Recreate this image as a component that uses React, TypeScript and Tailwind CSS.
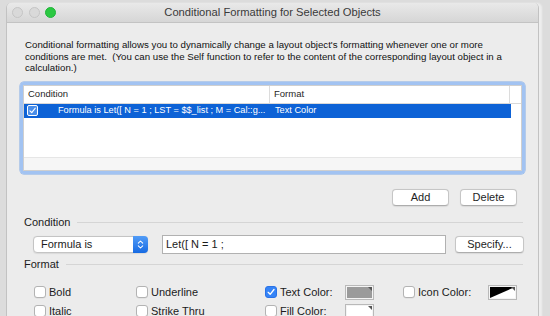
import React from "react";

const font = { fontFamily: '"Liberation Sans", Arial, sans-serif' };

function Check({ className = "" }: { className?: string }) {
  return (
    <svg viewBox="0 0 12 12" className={className} fill="none">
      <path d="M2.6 6.4 L5 8.8 L9.6 3" stroke="white" strokeWidth="1.6" strokeLinecap="round" strokeLinejoin="round" />
    </svg>
  );
}

function Box({ checked = false }: { checked?: boolean }) {
  if (checked) {
    return (
      <span className="flex h-[12px] w-[12px] shrink-0 items-center justify-center rounded-[3px] border border-[#2a72e6] bg-[#3584f7]">
        <Check className="h-[10px] w-[10px]" />
      </span>
    );
  }
  return (
    <span className="h-[12px] w-[12px] shrink-0 rounded-[3px] border border-[#b3b3b3] bg-white shadow-[0_0.5px_0_rgba(0,0,0,0.08)]" />
  );
}

function Well({ kind }: { kind: "gray" | "white" | "split" }) {
  return (
    <span className="flex h-[15px] w-[29px] shrink-0 border border-[#b9b9b9] bg-[#f4f4f4] p-[1px]">
      <svg viewBox="0 0 25 11" preserveAspectRatio="none" className="h-full w-full">
        {kind === "gray" && <rect x="0" y="0" width="25" height="11" fill="#9b9b9b" />}
        {kind === "white" && <rect x="0" y="0" width="25" height="11" fill="#ffffff" />}
        {kind === "split" && (
          <>
            <rect x="0" y="0" width="25" height="11" fill="#000000" />
            <polygon points="0,11 25,0 25,11" fill="#ffffff" />
          </>
        )}
        <polygon points="21,0 25,0 25,4" fill="#555555" />
      </svg>
    </span>
  );
}

function Button({ label, width }: { label: string; width: string }) {
  return (
    <button
      className={`${width} flex h-[17px] items-center justify-center rounded-[4px] border border-[#c6c6c6] border-b-[#adadad] bg-white text-[11px] leading-none text-[#1e1e1e] shadow-[0_0.5px_1px_rgba(0,0,0,0.08)]`}
    >
      {label}
    </button>
  );
}

function SectionLabel({ label, gap }: { label: string; gap: string }) {
  return (
    <div className="flex items-center pl-[4px] pr-[2px]">
      <span className="text-[11px] leading-[13px] text-[#1b1b1b]">{label}</span>
      <span className={`${gap} h-px flex-1 bg-[#d5d5d5]`} />
    </div>
  );
}

function Option({ checked, label, well }: { checked?: boolean; label: string; well?: "gray" | "white" | "split" }) {
  return (
    <div className="flex h-[15px] items-center">
      <Box checked={checked} />
      <span className="ml-[3px] text-[11px] leading-none text-[#1b1b1b]">{label}</span>
      {well ? <span className="ml-auto"><Well kind={well} /></span> : null}
    </div>
  );
}

export default function App() {
  return (
    <div className="h-[316px] w-[550px] overflow-hidden bg-[#dcdcdc] pl-[6px] pt-[3px]" style={font}>
      <div className="h-[320px] w-[533px] overflow-hidden rounded-t-[5px] border-x border-[#c2c2c2] bg-[#ececec] shadow-[3px_0_2px_rgba(255,255,255,0.5)]">
        {/* title bar */}
        <div className="grid h-[20px] grid-cols-[1fr_auto_1fr] items-center border-b border-[#c3c3c3] bg-gradient-to-b from-[#e9e9e9] to-[#d6d6d6]">
          <div className="flex items-center gap-[5.5px] pl-[5px]">
            <span className="h-[11px] w-[11px] rounded-full border border-[#c4c4c4] bg-[#d9d9d9]" />
            <span className="h-[11px] w-[11px] rounded-full border border-[#c4c4c4] bg-[#d9d9d9]" />
            <span className="h-[11px] w-[11px] rounded-full border border-[#20b53a] bg-[#2bc842]" />
          </div>
          <span className="text-[11.2px] leading-none text-[#3a3a3a]">Conditional Formatting for Selected Objects</span>
          <div />
        </div>

        <div className="px-[13px]">
          <p className="mt-[16px] px-[5px] text-[9.7px] leading-[11.5px] text-[#111]">
            Conditional formatting allows you to dynamically change a layout object's formatting whenever one or more
            <br />
            conditions are met.&nbsp; (You can use the Self function to refer to the content of the corresponding layout object in a
            <br />
            calculation.)
          </p>

          {/* list */}
          <div className="mt-[8px] h-[92px] rounded-[4px] border-[3px] border-[#a2c3f2] shadow-[0_0_0_0.5px_#7faae6]">
            <div className="flex h-full flex-col border border-[#cfcfcf] bg-white">
              <div className="flex h-[18px] items-center border-b border-[#d9d9d9] text-[9.5px] text-[#262626]">
                <div className="flex h-full w-[246px] items-center border-r border-[#dcdcdc] pl-[4px]">Condition</div>
                <div className="flex h-full w-[240px] items-center border-r border-[#dcdcdc] pl-[4px]">Format</div>
                <div className="flex-1" />
              </div>
              <div className="flex h-[14px] items-center text-[9.2px] text-white">
                <div className="flex h-full w-[487px] items-center bg-[#0d62d6]">
                  <div className="flex w-[247px] items-center overflow-hidden whitespace-nowrap pl-[3px]">
                    <span className="flex h-[11px] w-[11px] shrink-0 items-center justify-center rounded-[2px] border border-white bg-[#4a8ee9]">
                      <Check className="h-[9px] w-[9px]" />
                    </span>
                    <span className="ml-[20px]">Formula is Let([ N = 1 ; LST = $$_list ; M = Cal::g...</span>
                  </div>
                  <div className="pl-[4px]">Text Color</div>
                </div>
              </div>
              <div className="flex-1" />
              <div className="h-[13px] border-t border-[#e6e6e6] bg-[#f6f6f6]" />
            </div>
          </div>

          <div className="mt-[15px] flex justify-end gap-[11px] pr-[8px]">
            <Button label="Add" width="w-[57px]" />
            <Button label="Delete" width="w-[57px]" />
          </div>

          <div className="mt-[10px]">
            <SectionLabel label="Condition" gap="ml-[7px]" />
          </div>

          <div className="mt-[6px] flex h-[19px] items-center pl-[13px]">
            <div className="flex h-[17px] w-[115px] items-center rounded-[4px] border border-[#c4c4c4] bg-white shadow-[0_0.5px_1px_rgba(0,0,0,0.08)]">
              <span className="flex-1 pl-[7px] text-[11px] leading-none text-[#1b1b1b]">Formula is</span>
              <span className="flex h-[17px] w-[15px] -mr-px items-center justify-center rounded-r-[4px] bg-gradient-to-b from-[#519cf7] to-[#156ae2]">
                <svg viewBox="0 0 8 12" className="h-[11px] w-[7px]" fill="none">
                  <path d="M1.5 4.5 L4 2 L6.5 4.5 M1.5 7.5 L4 10 L6.5 7.5" stroke="white" strokeWidth="1.2" strokeLinecap="round" strokeLinejoin="round" />
                </svg>
              </span>
            </div>
            <div className="ml-[14px] flex h-[19px] w-[284px] items-center border border-[#b1b1b1] bg-white pl-[3px] text-[11px] leading-none text-[#1b1b1b]">
              Let([ N = 1 ;
            </div>
            <div className="ml-[9px]">
              <Button label="Specify..." width="w-[69px]" />
            </div>
          </div>

          <div className="mt-[4px]">
            <SectionLabel label="Format" gap="ml-[7px]" />
          </div>

          <div className="mt-[14px] grid grid-cols-[102px_129px_138px_115px] gap-y-[4px] pl-[14px]">
            <Option label="Bold" />
            <Option label="Underline" />
            <div className="pr-[29px]">
              <Option checked label="Text Color:" well="gray" />
            </div>
            <div className="pr-[1px]">
              <Option label="Icon Color:" well="split" />
            </div>
            <Option label="Italic" />
            <Option label="Strike Thru" />
            <div className="pr-[29px]">
              <Option label="Fill Color:" well="white" />
            </div>
            <div />
          </div>
        </div>
      </div>
    </div>
  );
}
